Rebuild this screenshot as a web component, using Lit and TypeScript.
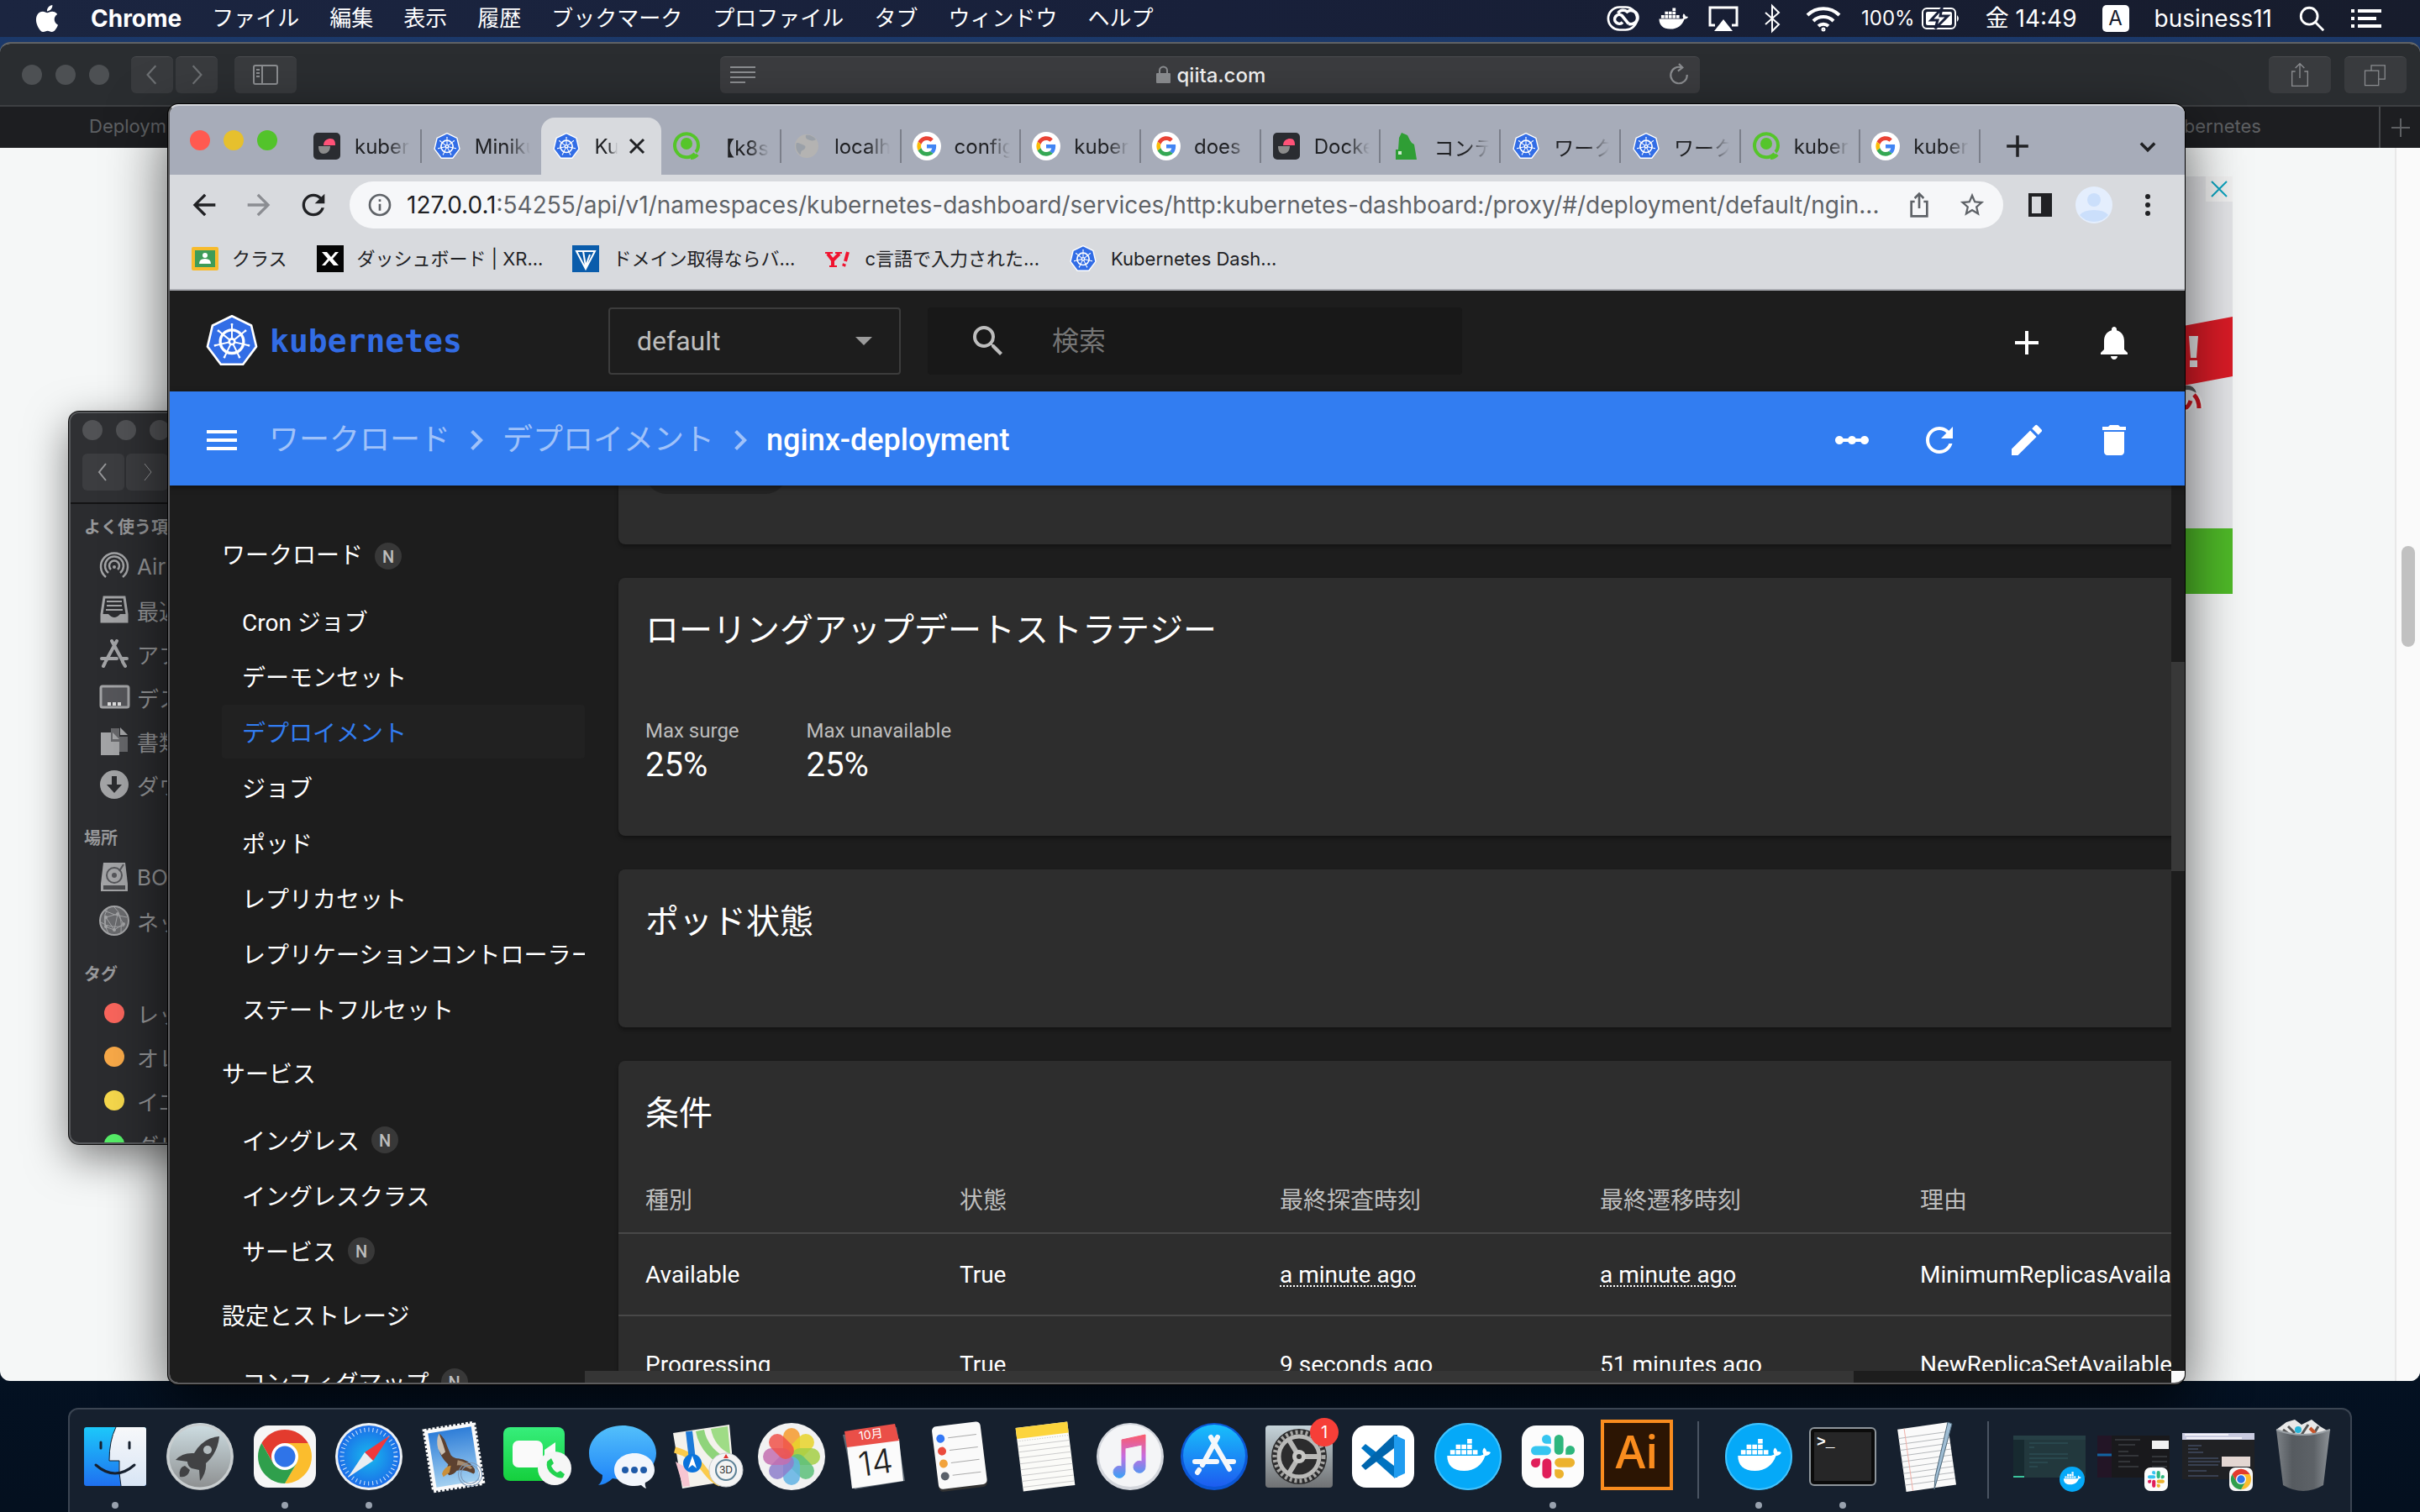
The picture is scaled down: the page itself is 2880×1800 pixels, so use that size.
import { LitElement, html, svg, css } from "lit";
import { customElement } from "lit/decorators.js";
import { classMap } from "lit/directives/class-map.js";

/* ---------- shared styles ---------- */

const base = css`
  *,
  *::before,
  *::after {
    box-sizing: border-box;
  }
  :host {
    display: block;
    font-family: Inter, "Noto Sans CJK JP", sans-serif;
  }
  button,
  input,
  select {
    font: inherit;
    color: inherit;
    border: 0;
    margin: 0;
    padding: 0;
    background: none;
    outline: none;
    min-width: 0;
  }
  a {
    color: inherit;
    text-decoration: none;
  }
  ul,
  nav,
  h2,
  h3,
  dl,
  dd,
  p {
    margin: 0;
    padding: 0;
    list-style: none;
    font-weight: inherit;
  }
  svg {
    display: block;
    flex: none;
    overflow: visible;
  }
  button {
    display: flex;
    align-items: center;
    justify-content: center;
  }
`;

/* ---------- shared drawings ---------- */

const stroke = (size: number, width: number, body: unknown) => html`
  <svg width=${size} height=${size} viewBox="0 0 24 24" fill="none" stroke="currentColor"
    stroke-width=${width} aria-hidden="true">${body}</svg>`;

const solid = (size: number, d: string) => html`
  <svg width=${size} height=${size} viewBox="0 0 24 24" fill="currentColor" aria-hidden="true">
    <path d=${d}></path>
  </svg>`;

const kube = (size: number) => html`
  <svg width=${size} height=${size} viewBox="0 0 100 100" aria-hidden="true">
    <path d="M50 5 85 22 94 60 70 92H30L6 60 15 22Z" fill="#326de6" stroke="#fff" stroke-width="4"
      stroke-linejoin="round"></path>
    <g stroke="#fff" stroke-width="3" fill="none">
      <circle cx="50" cy="51" r="21" stroke-width="5"></circle>
      ${[0, 1, 2, 3, 4, 5, 6].map(
        (k) => svg`<path d="M50 46V18M48 20h4" transform="rotate(${(k * 360) / 7} 50 51)"></path>`
      )}
    </g>
    <circle cx="50" cy="51" r="7" fill="#fff"></circle>
    <circle cx="50" cy="51" r="3" fill="#326de6"></circle>
  </svg>`;

const whale = (fill: string) => svg`
  <g fill=${fill}>
    <path d="M1 12.4h17.2c.9 0 1.6-.3 2-.7-.7-1.1-.6-2.4.3-3.5.9.6 1.3 1.3 1.4 2.1.8-.1 1.5 0 2.1.4-.5 1.2-1.5 1.8-2.9 1.8C19.3 17.4 15.6 20.4 10 20.4c-6 0-9-3-9-8z"></path>
    <path d="M2.6 9.4h2.5v2.4H2.6zM5.6 9.4h2.5v2.4H5.6zM8.6 9.4h2.5v2.4H8.6zM11.6 9.4h2.5v2.4h-2.5zM14.6 9.4h2.5v2.4h-2.5zM5.6 6.5h2.5v2.4H5.6zM8.6 6.5h2.5v2.4H8.6zM11.6 6.5h2.5v2.4h-2.5zM11.6 3.6h2.5V6h-2.5z"></path>
  </g>`;

const chromeMark = svg`
  <path d="M-27.7-16A32 32 0 0 1 27.7-16H0L-13.9 8Z" fill="#e33b2e"></path>
  <path d="M27.7-16A32 32 0 0 1 0 32L13.9 8 0-16Z" fill="#fbbd2d"></path>
  <path d="M0 32A32 32 0 0 1-27.7-16L-13.9 8 0 12 13.9 8Z" fill="#2f9f4c"></path>
  <circle r="16" fill="#fff"></circle>
  <circle r="12.5" fill="#2f74e8"></circle>`;

const slackMark = svg`
  ${[
    ["#36c5f0", 0],
    ["#2eb67d", 90],
    ["#ecb22e", 180],
    ["#e01e5a", 270],
  ].map(
    ([color, turn]) => svg`
      <g fill=${color} transform="rotate(${turn} 12 12)">
        <rect x="0" y="6.2" width="11" height="5" rx="2.5"></rect>
        <path d="M8.5 5A2.5 2.5 0 1 1 11 2.5V5z"></path>
      </g>`
  )}`;

const googleIcon = html`
  <svg width="34" height="34" viewBox="-11 -11 70 70" aria-hidden="true">
    <circle cx="24" cy="24" r="35" fill="#fff"></circle>
    <path fill="#ea4335" d="M24 9.5c3.54 0 6.71 1.22 9.21 3.6l6.85-6.85C35.9 2.38 30.47 0 24 0 14.62 0 6.51 5.38 2.56 13.22l7.98 6.19C12.43 13.72 17.74 9.5 24 9.5z"></path>
    <path fill="#4285f4" d="M46.98 24.55c0-1.57-.15-3.09-.38-4.55H24v9.02h12.94c-.58 2.96-2.26 5.48-4.78 7.18l7.73 6c4.51-4.18 7.09-10.36 7.09-17.65z"></path>
    <path fill="#fbbc05" d="M10.53 28.59c-.48-1.45-.76-2.99-.76-4.59s.27-3.14.76-4.59l-7.98-6.19C.92 16.46 0 20.12 0 24c0 3.88.92 7.54 2.56 10.78l7.97-6.19z"></path>
    <path fill="#34a853" d="M24 48c6.48 0 11.93-2.13 15.89-5.81l-7.73-6c-2.15 1.45-4.92 2.3-8.16 2.3-6.26 0-11.57-4.22-13.47-9.91l-7.98 6.19C6.51 42.62 14.62 48 24 48z"></path>
  </svg>`;

const qiitaIcon = html`
  <svg width="34" height="34" viewBox="0 0 34 34" aria-hidden="true">
    <path d="M27 26A14 14 0 1 1 31 16" fill="none" stroke="#55c52a" stroke-width="4"></path>
    <path d="M31 16q0 5-3 8" fill="none" stroke="#55c52a" stroke-width="4"></path>
    <circle cx="17" cy="14" r="7" fill="#55c52a"></circle>
    <path d="M22 31q5 0 8-4" fill="none" stroke="#55c52a" stroke-width="4"></path>
  </svg>`;

const darkIcon = html`
  <svg width="32" height="32" viewBox="0 0 32 32" aria-hidden="true">
    <rect width="32" height="32" rx="5" fill="#2a2c31"></rect>
    <path d="M12 15C12 9 17 7 20 7c5 0 6 3 6 8z" fill="#ff5278"></path>
    <path d="M6 16h14c0 6-4 9-8 9-5 0-6-5-6-9z" fill="#8b8b8b"></path>
  </svg>`;

const globeIcon = html`
  <svg width="32" height="32" viewBox="0 0 32 32" aria-hidden="true">
    <circle cx="16" cy="16" r="14" fill="#b4b3b2"></circle>
    <path d="M4 12c4 0 6 2 9 3s1 5-2 6-1 5-3 5C4 22 2 17 4 12zM15 3c-1 4 2 5 5 6s6 0 7-1C24 4 19 2 15 3z" fill="#9aa0a8"></path>
  </svg>`;

const towerIcon = html`
  <svg width="32" height="32" viewBox="0 0 32 32" aria-hidden="true">
    <path d="M4 32V20h3l1-14 3-6 7 3 3 6 2 3 3 2 3 18z" fill="#2f9e35"></path>
    <path d="M7 22h4v4H7z" fill="#cfe8cf"></path>
  </svg>`;

const icons = {
  add: "M19 13h-6v6h-2v-6H5v-2h6V5h2v6h6v2z",
  bell: "M12 22c1.1 0 2-.9 2-2h-4c0 1.1.89 2 2 2zm6-6v-5c0-3.07-1.64-5.64-4.5-6.32V4c0-.83-.67-1.5-1.5-1.5s-1.5.67-1.5 1.5v.68C7.63 5.36 6 7.92 6 11v5l-2 2v1h16v-1l-2-2z",
  menu: "M3 18h18v-2H3v2zm0-5h18v-2H3v2zm0-7v2h18V6H3z",
  scale:
    "M19.5 9.5c-1.03 0-1.9.62-2.29 1.5h-2.92c-.39-.88-1.26-1.5-2.29-1.5s-1.9.62-2.29 1.5H6.79c-.39-.88-1.26-1.5-2.29-1.5C3.12 9.5 2 10.62 2 12s1.12 2.5 2.5 2.5c1.03 0 1.9-.62 2.29-1.5h2.92c.39.88 1.26 1.5 2.29 1.5s1.9-.62 2.29-1.5h2.92c.39.88 1.26 1.5 2.29 1.5 1.38 0 2.5-1.12 2.5-2.5s-1.12-2.5-2.5-2.5z",
  refresh:
    "M17.65 6.35C16.2 4.9 14.21 4 12 4c-4.42 0-7.99 3.58-7.99 8s3.57 8 7.99 8c3.73 0 6.84-2.55 7.73-6h-2.08c-.82 2.33-3.04 4-5.65 4-3.31 0-6-2.69-6-6s2.69-6 6-6c1.66 0 3.14.69 4.22 1.78L13 11h7V4l-2.35 2.35z",
  edit: "M3 17.25V21h3.75L17.81 9.94l-3.75-3.75L3 17.25zM20.71 7.04a.996.996 0 0 0 0-1.41l-2.34-2.34a.996.996 0 0 0-1.41 0l-1.83 1.83 3.75 3.75 1.83-1.83z",
  trash: "M6 19c0 1.1.9 2 2 2h8c1.1 0 2-.9 2-2V7H6v12zM19 4h-3.5l-1-1h-5l-1 1H5v2h14V4z",
  search:
    "M15.5 14h-.79l-.28-.27A6.471 6.471 0 0 0 16 9.5 6.5 6.5 0 1 0 9.5 16c1.61 0 3.09-.59 4.23-1.57l.27.28v.79l5 4.99L20.49 19l-4.99-5zm-6 0C7.01 14 5 11.99 5 9.5S7.01 5 9.5 5 14 7.01 14 9.5 11.99 14 9.5 14z",
  chevron: "M10 6 8.59 7.41 13.17 12l-4.58 4.59L10 18l6-6z",
  star: "M22 9.24l-7.19-.62L12 2 9.19 8.63 2 9.24l5.46 4.73L5.82 21 12 17.27 18.18 21l-1.63-7.03L22 9.24zM12 15.4l-3.76 2.27 1-4.28-3.32-2.88 4.38-.38L12 6.1l1.71 4.04 4.38.38-3.32 2.88 1 4.28L12 15.4z",
  back: "M20 11H7.83l5.59-5.59L12 4l-8 8 8 8 1.41-1.41L7.83 13H20v-2z",
  forward: "M12 4l-1.41 1.41L16.17 11H4v2h12.17l-5.58 5.59L12 20l8-8z",
  apple:
    "M12.152 6.896c-.948 0-2.415-1.078-3.96-1.04-2.04.027-3.91 1.183-4.961 3.014-2.117 3.675-.546 9.103 1.519 12.09 1.013 1.454 2.208 3.09 3.792 3.039 1.52-.065 2.09-.987 3.935-.987 1.831 0 2.35.987 3.96.948 1.637-.026 2.676-1.48 3.676-2.948 1.156-1.688 1.636-3.325 1.662-3.415-.039-.013-3.182-1.221-3.22-4.857-.026-3.04 2.48-4.494 2.597-4.559-1.429-2.09-3.623-2.324-4.39-2.376-2-.156-3.675 1.09-4.61 1.09zM15.53 3.83c.843-1.012 1.4-2.427 1.245-3.83-1.207.052-2.662.805-3.532 1.818-.78.896-1.454 2.338-1.273 3.714 1.338.104 2.715-.688 3.559-1.701",
};

const shareBody = svg`<path d="M8 9H5v13h14V9h-3M12 15V2M8 6l4-4 4 4"></path>`;

/* ---------- menu bar ---------- */

@customElement("menu-bar")
export class MenuBar extends LitElement {
  static styles = [
    base,
    css`
      :host {
        background: linear-gradient(90deg, #1b2540, #18203a 50%, #171c2c);
        color: #fff;
        font-size: 26px;
      }
      .bar {
        height: 44px;
        display: flex;
        align-items: center;
        justify-content: space-between;
        padding: 0 46px 0 40px;
        line-height: 44px;
        white-space: nowrap;
      }
      .menus,
      .status,
      .extras {
        display: flex;
        align-items: center;
      }
      .menus {
        gap: 36px;
      }
      .status {
        gap: 30px;
        font-size: 28px;
      }
      .extras {
        gap: 24px;
      }
      .app {
        font-weight: 700;
        font-size: 28px;
      }
      .battery {
        gap: 8px;
        font-size: 24px;
      }
      .input {
        width: 32px;
        height: 32px;
        border-radius: 5px;
        background: #fff;
        color: #171c2c;
        line-height: 32px;
        font-size: 24px;
      }
    `,
  ];

  render() {
    const menus = ["ファイル", "編集", "表示", "履歴", "ブックマーク", "プロファイル", "タブ", "ウィンドウ", "ヘルプ"];
    return html`
      <div class="bar">
        <nav class="menus">
          <button aria-label="Apple">${solid(32, icons.apple)}</button>
          <button class="app">Chrome</button>
          ${menus.map((m) => html`<button>${m}</button>`)}
        </nav>
        <div class="status">
          <div class="extras">
            <button aria-label="Creative Cloud">
              <svg width="36" height="32" viewBox="0 0 40 32" fill="none" stroke="#fff">
                <rect x="1" y="1" width="38" height="30" rx="15" stroke-width="3"></rect>
                <path d="M20 21a6 6 0 1 1-1-9l9 11" stroke-width="4"></path>
                <path d="M14 9a8 8 0 0 1 12-2 9 9 0 1 1 2 16" stroke-width="4"></path>
              </svg>
            </button>
            <button aria-label="Docker">
              <svg width="36" height="36" viewBox="0 0 24 24">${whale("#fff")}</svg>
            </button>
            <button aria-label="AirPlay">
              <svg width="36" height="32" viewBox="0 0 36 32">
                <path d="M8 24H2V3h32v21h-6" fill="none" stroke="#fff" stroke-width="3"></path>
                <path d="M18 17l11 14H7z" fill="#fff"></path>
              </svg>
            </button>
            <button aria-label="Bluetooth">
              <svg width="32" height="32" viewBox="0 0 32 32" fill="none" stroke="#fff" stroke-width="2">
                <path d="M8 9l16 14-8 8V1l8 8L8 23"></path>
              </svg>
            </button>
            <button aria-label="Wi-Fi">
              <svg width="42" height="30" viewBox="0 0 42 30" fill="none" stroke="#fff" stroke-width="4">
                <path d="M2 11a27 27 0 0 1 38 0M9 18a17 17 0 0 1 24 0M15 24a9 9 0 0 1 12 0"></path>
                <circle cx="21" cy="28" r="1" stroke-width="3"></circle>
              </svg>
            </button>
            <button class="battery">
              100%
              <svg width="46" height="26" viewBox="0 0 46 26">
                <rect x="1" y="1" width="39" height="24" rx="5" fill="none" stroke="#fff" stroke-width="2"></rect>
                <rect x="5" y="5" width="31" height="16" rx="2" fill="#fff"></rect>
                <path d="M42 9q4 4 0 8z" fill="#fff"></path>
                <path d="M24 1L11 15h8l-3 10 15-15h-9z" fill="#fff" stroke="#18203a" stroke-width="3"></path>
              </svg>
            </button>
          </div>
          <button>金 14:49</button>
          <button class="input">A</button>
          <button>business11</button>
          <button aria-label="検索">
            ${stroke(34, 2, svg`<circle cx="10" cy="10" r="7"></circle><path d="M15 15l7 7"></path>`)}
          </button>
          <button aria-label="通知センター">
            <svg width="36" height="24" viewBox="0 0 36 24" fill="#fff">
              <path d="M0 1h4v4H0zM8 1h28v4H8zM0 10h4v4H0zM8 10h22v4H8zM0 19h4v4H0zM8 19h28v4H8z"></path>
            </svg>
          </button>
        </div>
      </div>
    `;
  }
}

/* ---------- Safari window ---------- */

@customElement("safari-window")
export class SafariWindow extends LitElement {
  static styles = [
    base,
    css`
      :host {
        display: flex;
        flex-direction: column;
        border-radius: 12px;
        overflow: hidden;
        background: #f5f7f7;
        border-top: 2px solid #5f6265;
        color: #8b8d90;
        font-size: 24px;
      }
      .toolbar {
        height: 73px;
        flex: none;
        background: #2a2d30;
        display: grid;
        grid-template-columns: 1fr 1166px 1fr;
        align-items: center;
      }
      .left,
      .right,
      .lights,
      .nav {
        display: flex;
        align-items: center;
      }
      .left {
        padding-left: 26px;
      }
      .lights {
        gap: 16px;
        margin-right: 26px;
      }
      .light {
        width: 24px;
        height: 24px;
        border-radius: 50%;
        background: #4d5053;
      }
      .nav {
        gap: 3px;
        margin-right: 20px;
      }
      .btn {
        width: 50px;
        height: 44px;
        border-radius: 6px;
        background: #393b3e;
        border-top: 1px solid #4b4d50;
        color: #6d7073;
      }
      .wide {
        width: 74px;
      }
      .right {
        justify-content: flex-end;
        gap: 16px;
        padding-right: 16px;
      }
      .right .btn,
      .left .wide {
        color: #8b8d90;
      }
      .address {
        height: 44px;
        border-radius: 6px;
        background: #3b3c3f;
        border-top: 1px solid #4b4d50;
        display: flex;
        align-items: center;
        justify-content: space-between;
        padding: 0 12px;
      }
      .site {
        display: flex;
        align-items: center;
        gap: 8px;
      }
      .site input {
        width: 108px;
        color: #f2f2f2;
        font-weight: 500;
      }
      .tabs {
        height: 51px;
        flex: none;
        background: #1d1e21;
        border-top: 2px solid #3d3f42;
        display: flex;
        align-items: center;
        justify-content: space-between;
        padding-left: 106px;
        color: #5e6063;
        font-size: 22px;
        line-height: 46px;
      }
      .tail {
        display: flex;
        align-items: flex-start;
        height: 100%;
        gap: 140px;
      }
      .tabs > span {
        align-self: flex-start;
      }
      .new {
        width: 49px;
        height: 100%;
        border-left: 2px solid #46484b;
        color: #5e6063;
      }
      .page {
        flex: 1;
        min-height: 0;
        display: flex;
        justify-content: flex-end;
      }
      .ad {
        width: 300px;
        height: 497px;
        margin: 34px 193px 0 0;
        background: #e4e5e8;
        display: flex;
        flex-direction: column;
        justify-content: space-between;
      }
      .close {
        width: 32px;
        height: 30px;
        align-self: flex-end;
        background: #f1f1f1;
        color: #0aa3bf;
      }
      .art {
        align-self: flex-end;
      }
      .scroll {
        width: 30px;
        border-left: 2px solid #e8e8e8;
        background: #fafafa;
        padding: 474px 6px 0;
      }
      .thumb {
        height: 120px;
        border-radius: 8px;
        background: #c1c1c1;
      }
    `,
  ];

  render() {
    return html`
      <div class="toolbar">
        <div class="left">
          <div class="lights"><i class="light"></i><i class="light"></i><i class="light"></i></div>
          <div class="nav">
            <button class="btn" aria-label="戻る">${stroke(26, 2, svg`<path d="M16 2L7 12l9 10"></path>`)}</button>
            <button class="btn" aria-label="進む">${stroke(26, 2, svg`<path d="M8 2l9 10-9 10"></path>`)}</button>
          </div>
          <button class="btn wide" aria-label="サイドバー">
            <svg width="30" height="24" viewBox="0 0 30 24" fill="none" stroke="currentColor" stroke-width="2">
              <rect x="1" y="1" width="28" height="22" rx="2"></rect>
              <path d="M11 1v22M4 6h4M4 10h4M4 14h4"></path>
            </svg>
          </button>
        </div>
        <div class="address">
          <svg width="30" height="22" viewBox="0 0 30 22" fill="currentColor">
            <path d="M0 1h30v2H0zM0 7h30v2H0zM0 13h30v2H0zM0 19h18v2H0z"></path>
          </svg>
          <label class="site">
            <svg width="17" height="20" viewBox="0 0 17 20">
              <rect y="8" width="17" height="12" rx="1" fill="#8b8d90"></rect>
              <path d="M4 8V5a4 4 0 0 1 9 0v3" fill="none" stroke="#8b8d90" stroke-width="2"></path>
            </svg>
            <input aria-label="アドレス" value="qiita.com" />
          </label>
          ${stroke(26, 2, svg`<path d="M15 4A9 9 0 1 0 21 12M11 8l5-4-4-4"></path>`)}
        </div>
        <div class="right">
          <button class="btn wide" aria-label="共有">${stroke(32, 1, shareBody)}</button>
          <button class="btn wide" aria-label="タブ一覧">
            ${stroke(30, 1, svg`<path d="M2 8h13v14H2zM8 8V3h13v13h-6"></path>`)}
          </button>
        </div>
      </div>
      <div class="tabs">
        <span>Deploym</span>
        <div class="tail">
          <span>kubernetes</span>
          <button class="new" aria-label="新規タブ">${stroke(24, 2, svg`<path d="M12 1v22M1 12h22"></path>`)}</button>
        </div>
      </div>
      <div class="page">
        <div class="ad">
          <button class="close" aria-label="閉じる">${stroke(24, 2, svg`<path d="M3 3l18 18M21 3L3 21"></path>`)}</button>
          <svg class="art" width="80" height="332" viewBox="0 0 80 332">
            <path d="M0 17L80 2v71L0 88z" fill="#d91b26"></path>
            <path d="M28 25h11l-2 26h-7zM29 54h9v8h-9z" fill="#e8e8ea"></path>
            <path d="M22 84q12-2 15 9-9-6-15-3z" fill="#555"></path>
            <path d="M20 108q6 6 10-6M34 95q6 6 6 16" fill="none" stroke="#eee" stroke-width="10"></path>
            <path d="M20 108q6 6 10-6M34 95q6 6 6 16" fill="none" stroke="#c9141f" stroke-width="5"></path>
            <path d="M0 254h80v78H0z" fill="#4fb928"></path>
          </svg>
        </div>
        <div class="scroll"><div class="thumb"></div></div>
      </div>
    `;
  }
}

/* ---------- Finder window ---------- */

@customElement("finder-window")
export class FinderWindow extends LitElement {
  static styles = [
    base,
    css`
      :host {
        background: #2b2c2f;
        border: 2px solid #56585b;
        border-radius: 12px;
        overflow: hidden;
        color: #97989a;
        box-shadow: 0 16px 50px rgba(0, 0, 0, 0.5), 0 0 0 1px #111;
        font-size: 26px;
        white-space: nowrap;
      }
      .head {
        height: 108px;
        background: #2f3033;
        border-bottom: 2px solid #131314;
        padding: 8px 14px;
        display: flex;
        flex-direction: column;
        gap: 16px;
      }
      .lights {
        display: flex;
        gap: 16px;
      }
      .light {
        width: 24px;
        height: 24px;
        border-radius: 50%;
        background: #515255;
        flex: none;
      }
      .nav {
        display: flex;
        gap: 2px;
      }
      .nav button {
        width: 50px;
        height: 44px;
        border-radius: 6px;
        background: #3c3d40;
        flex: none;
      }
      .group {
        padding: 0 16px 18px;
      }
      .group h3 {
        font-size: 20px;
        line-height: 40px;
        font-weight: 600;
      }
      .group:first-of-type {
        padding-top: 8px;
      }
      .row {
        height: 52px;
        display: flex;
        align-items: center;
        gap: 8px;
        padding-left: 17px;
      }
      .row svg {
        width: 38px;
      }
    `,
  ];

  private icon(name: string) {
    const g = "#a3a4a6";
    const shapes: Record<string, unknown> = {
      air: svg`<g fill="none" stroke=${g} stroke-width="2.500"><path d="M8 31a16 16 0 1 1 20 0M11 26a11 11 0 1 1 14 0M14 22a6 6 0 1 1 8 0"></path></g><circle cx="18" cy="19" r="2" fill=${g}></circle>`,
      recent: svg`<path d="M6 3h24l3 20v9H3v-9z" fill="none" stroke=${g} stroke-width="3"></path><path d="M9 8h18M9 13h18M8 18h20" stroke=${g} stroke-width="2"></path><path d="M3 23h8q7 8 14 0h8v10H3z" fill=${g}></path>`,
      apps: svg`<path d="M21 3L8 27M15 3l13 24M3 24h18M27 24h6M7 29l-2 4M28 28l3 5" stroke=${g} stroke-width="4" stroke-linecap="round"></path>`,
      desk: svg`<rect x="2" y="5" width="33" height="25" rx="2" fill="#55565a" stroke=${g} stroke-width="3"></rect><path d="M10 24h4v4h-4zM16 24h4v4h-4zM22 24h4v4h-4z" fill="#ddd"></path>`,
      docs: svg`<path d="M14 3h10v10h10v18H14z" fill="#66676a"></path><path d="M25 2l9 9h-9z" fill=${g}></path><path d="M2 8h12v11h10v16H2z" fill=${g}></path><path d="M16 8l8 8h-8z" fill=${g}></path>`,
      down: svg`<circle cx="18" cy="18" r="17" fill=${g}></circle><path d="M15 8h6v10h6l-9 10-9-10h6z" fill="#2b2c2f"></path>`,
      disk: svg`<path d="M5 1h26l3 25v9H2v-9z" fill=${g}></path><circle cx="18" cy="16" r="9" fill="none" stroke="#55565a" stroke-width="2"></circle><circle cx="18" cy="16" r="3" fill="#55565a"></circle><path d="M5 28h26v5H5z" fill="#4a4b4e"></path><path d="M24 11l5-8" stroke="#55565a" stroke-width="2"></path>`,
      net: svg`<circle cx="18" cy="18" r="17" fill="#6a6b6e" stroke=${g} stroke-width="2"></circle><g fill="none" stroke=${g} stroke-width="1"><path d="M8 14l14-4 7 12-11 7-11-4zM8 14l10 15M22 10l-4 19M18 2q10 8 8 30M6 6q12 6 27 8M2 20q12 8 28 4M10 3Q2 18 11 33"></path></g><g fill=${g}><circle cx="8" cy="14" r="2"></circle><circle cx="22" cy="10" r="2"></circle><circle cx="29" cy="22" r="2"></circle><circle cx="18" cy="29" r="2"></circle><circle cx="8" cy="25" r="2"></circle></g>`,
    };
    if (name.startsWith("#")) {
      return html`<svg width="38" height="36" viewBox="0 0 36 36"><circle cx="18" cy="18" r="12" fill=${name}></circle></svg>`;
    }
    return html`<svg width="38" height="36" viewBox="0 0 36 36">${shapes[name]}</svg>`;
  }

  render() {
    const groups: [string, [string, string][]][] = [
      ["よく使う項目", [["air", "AirDrop"], ["recent", "最近の項目"], ["apps", "アプリ"], ["desk", "デスクトップ"], ["docs", "書類"], ["down", "ダウンロード"]]],
      ["場所", [["disk", "BOOTCAMP"], ["net", "ネットワーク"]]],
      ["タグ", [["#f9655c", "レッド"], ["#f8a948", "オレンジ"], ["#f6d84c", "イエロー"], ["#56ee68", "グリーン"]]],
    ];
    return html`
      <div class="head">
        <div class="lights"><i class="light"></i><i class="light"></i><i class="light"></i></div>
        <div class="nav">
          <button aria-label="戻る">${stroke(24, 2, svg`<path d="M15 2L7 12l8 10"></path>`)}</button>
          <button aria-label="進む">${stroke(24, 1, svg`<path d="M9 2l8 10-8 10"></path>`)}</button>
        </div>
      </div>
      ${groups.map(
        ([title, rows]) => html`
          <section class="group">
            <h3>${title}</h3>
            ${rows.map(([icon, label]) => html`<div class="row">${this.icon(icon)}<span>${label}</span></div>`)}
          </section>`
      )}
    `;
  }
}

/* ---------- Kubernetes dashboard ---------- */

@customElement("kube-dashboard")
export class KubeDashboard extends LitElement {
  static styles = [
    base,
    css`
      :host {
        display: flex;
        flex-direction: column;
        min-height: 0;
        background: #1d1d1d;
        color: #fff;
        font-family: Roboto, "Noto Sans CJK JP", sans-serif;
        font-size: 28px;
      }
      .top {
        height: 120px;
        flex: none;
        display: flex;
        align-items: center;
        padding: 0 60px 0 41px;
      }
      .brand {
        display: flex;
        align-items: center;
        gap: 12px;
        width: 481px;
        color: #326ce5;
        font-family: "DejaVu Sans Mono", monospace;
        font-size: 38px;
        font-weight: 700;
      }
      .picker {
        width: 348px;
        height: 80px;
        border: 2px solid #3c3c3c;
        border-radius: 4px;
        position: relative;
        display: flex;
        align-items: center;
      }
      .picker select {
        appearance: none;
        width: 100%;
        height: 100%;
        padding: 0 32px;
        font-size: 32px;
        color: #bdbdbd;
      }
      .picker::after {
        content: "";
        position: absolute;
        right: 32px;
        border: 10px solid transparent;
        border-top-color: #9b9b9b;
        border-bottom: 0;
        pointer-events: none;
      }
      .search {
        margin-left: 32px;
        width: 636px;
        height: 80px;
        background: #181818;
        border-radius: 4px;
        display: flex;
        align-items: center;
        gap: 52px;
        padding-left: 48px;
        color: #bdbdbd;
      }
      .search input {
        flex: 1;
        font-size: 32px;
      }
      .search input::placeholder {
        color: #757575;
        opacity: 1;
      }
      .tools {
        margin-left: auto;
        display: flex;
        gap: 56px;
      }
      .top .tools {
        padding-top: 4px;
      }
      .bar {
        height: 112px;
        flex: none;
        background: #327df1;
        display: flex;
        align-items: center;
        padding: 4px 60px 0 38px;
        font-size: 36px;
        line-height: 48px;
        box-shadow: 0 2px 6px rgba(0, 0, 0, 0.5);
        z-index: 1;
      }
      .crumbs {
        display: flex;
        align-items: center;
        gap: 7px;
        margin-left: 32px;
        color: #a0c2f9;
      }
      .crumbs b {
        font-weight: 500;
        color: #fff;
      }
      .body {
        flex: 1;
        min-height: 0;
        display: flex;
      }
      .side {
        width: 494px;
        flex: none;
        overflow: hidden;
        padding: 39px 0 0 62px;
        white-space: nowrap;
      }
      .side h2 {
        font-size: 28px;
        line-height: 90px;
        display: flex;
        align-items: center;
        gap: 14px;
      }
      .side li {
        padding-bottom: 2px;
      }
      .side a {
        display: flex;
        align-items: center;
        gap: 14px;
        height: 64px;
        padding-left: 24px;
        border-radius: 4px;
      }
      .side .on {
        background: #212121;
        color: #327df1;
      }
      .badge {
        width: 32px;
        height: 32px;
        border-radius: 50%;
        background: #383838;
        color: #bdbdbd;
        font-size: 20px;
        font-weight: 500;
        line-height: 34px;
        text-align: center;
      }
      .main {
        flex: 1;
        min-width: 0;
        display: grid;
        grid-template-columns: minmax(0, 1fr) 16px;
        grid-template-rows: minmax(0, 1fr) 14px;
      }
      .view {
        overflow: hidden;
      }
      .content {
        width: 125%;
        padding: 0 40px;
        display: flex;
        flex-direction: column;
        gap: 40px;
      }
      .card {
        background: #2d2d2d;
        border-radius: 8px;
        box-shadow: 0 3px 4px rgba(0, 0, 0, 0.35);
        padding: 39px 32px 0;
      }
      .cut {
        margin-top: -40px;
        padding: 0 32px 60px;
      }
      .chip {
        width: 168px;
        height: 50px;
        border-radius: 25px;
        background: #232323;
      }
      .card h2 {
        font-size: 40px;
        line-height: 48px;
      }
      .facts {
        display: flex;
        gap: 80px;
        padding: 78px 0 60px;
      }
      .facts dt {
        font-size: 24px;
        line-height: 34px;
        color: #bdbdbd;
      }
      .facts dd {
        font-size: 40px;
        line-height: 48px;
      }
      .empty {
        padding-bottom: 101px;
      }
      .flush {
        padding: 39px 0 0;
      }
      .flush h2 {
        padding-left: 32px;
      }
      table {
        width: 100%;
        margin-top: 36px;
        border-collapse: collapse;
        table-layout: fixed;
      }
      th,
      td {
        text-align: left;
        font-weight: 400;
        padding: 0;
        white-space: nowrap;
        border-bottom: 2px solid #484848;
      }
      th:first-child,
      td:first-child {
        padding-left: 32px;
      }
      th {
        height: 82px;
        color: #bdbdbd;
      }
      td {
        height: 98px;
      }
      .tall td {
        height: 116px;
      }
      .c1 {
        width: 406px;
      }
      .c2 {
        width: 381px;
      }
      .time {
        text-decoration: underline dotted 2px;
        text-underline-offset: 4px;
      }
      .vtrack {
        padding-top: 210px;
      }
      .vthumb {
        height: 249px;
        background: #383838;
      }
      .hthumb {
        width: 80%;
        height: 100%;
        background: #353535;
      }
      .corner {
        background: #fafafa;
      }
    `,
  ];

  render() {
    const nav: [string, boolean, [string, boolean][]][] = [
      ["ワークロード", true, [["Cron ジョブ", false], ["デーモンセット", false], ["デプロイメント", false], ["ジョブ", false], ["ポッド", false], ["レプリカセット", false], ["レプリケーションコントローラー", false], ["ステートフルセット", false]]],
      ["サービス", false, [["イングレス", true], ["イングレスクラス", false], ["サービス", true]]],
      ["設定とストレージ", false, [["コンフィグマップ", true]]],
    ];
    const badge = html`<span class="badge">N</span>`;
    const rows = [
      ["Available", "True", "a minute ago", "a minute ago", "MinimumReplicasAvailable"],
      ["Progressing", "True", "9 seconds ago", "51 minutes ago", "NewReplicaSetAvailable"],
    ];
    return html`
      <header class="top">
        <a class="brand" href="#">${kube(66)}<span>kubernetes</span></a>
        <div class="picker">
          <select aria-label="ネームスペース"><option>default</option></select>
        </div>
        <label class="search">
          ${solid(48, icons.search)}
          <input type="text" placeholder="検索" aria-label="検索" />
        </label>
        <div class="tools">
          <button aria-label="作成">${solid(48, icons.add)}</button>
          <button aria-label="通知">${solid(48, icons.bell)}</button>
        </div>
      </header>
      <div class="bar">
        <button aria-label="メニュー">${solid(48, icons.menu)}</button>
        <nav class="crumbs">
          <a href="#">ワークロード</a>
          ${solid(48, icons.chevron)}
          <a href="#">デプロイメント</a>
          ${solid(48, icons.chevron)}
          <b>nginx-deployment</b>
        </nav>
        <div class="tools">
          <button aria-label="スケール">${solid(48, icons.scale)}</button>
          <button aria-label="再起動">${solid(48, icons.refresh)}</button>
          <button aria-label="編集">${solid(48, icons.edit)}</button>
          <button aria-label="削除">${solid(48, icons.trash)}</button>
        </div>
      </div>
      <div class="body">
        <nav class="side">
          ${nav.map(
            ([title, flagged, items]) => html`
              <h2>${title}${flagged ? badge : ""}</h2>
              <ul>
                ${items.map(
                  ([label, mark]) => html`
                    <li>
                      <a href="#" class=${classMap({ on: label === "デプロイメント" })}>${label}${mark ? badge : ""}</a>
                    </li>`
                )}
              </ul>`
          )}
        </nav>
        <div class="main">
          <div class="view">
            <div class="content">
              <section class="card cut"><div class="chip"></div></section>
              <section class="card">
                <h2>ローリングアップデートストラテジー</h2>
                <dl class="facts">
                  <div><dt>Max surge</dt><dd>25%</dd></div>
                  <div><dt>Max unavailable</dt><dd>25%</dd></div>
                </dl>
              </section>
              <section class="card empty"><h2>ポッド状態</h2></section>
              <section class="card flush">
                <h2>条件</h2>
                <table>
                  <colgroup><col class="c1" /><col class="c2" /><col class="c2" /><col class="c2" /><col /></colgroup>
                  <thead>
                    <tr><th>種別</th><th>状態</th><th>最終探査時刻</th><th>最終遷移時刻</th><th>理由</th></tr>
                  </thead>
                  <tbody>
                    ${rows.map(
                      (r, i) => html`
                        <tr class=${classMap({ tall: i === 1 })}>
                          ${r.map((c, k) => html`<td>${k === 2 || k === 3 ? html`<span class="time">${c}</span>` : c}</td>`)}
                        </tr>`
                    )}
                  </tbody>
                </table>
              </section>
            </div>
          </div>
          <div class="vtrack"><div class="vthumb"></div></div>
          <div><div class="hthumb"></div></div>
          <div class="corner"></div>
        </div>
      </div>
    `;
  }
}

/* ---------- Chrome window ---------- */

@customElement("chrome-window")
export class ChromeWindow extends LitElement {
  static styles = [
    base,
    css`
      :host {
        display: flex;
        flex-direction: column;
        border-radius: 12px;
        overflow: hidden;
        background: #d8dade;
        color: #202124;
        font-size: 24px;
        border: 2px solid #5c5c5e;
        border-top-color: #d3d5da;
        border-right-width: 0;
        box-shadow: 0 0 0 1px #000, 0 24px 70px rgba(0, 0, 0, 0.65);
      }
      .strip {
        height: 82px;
        flex: none;
        background: #a7acb9;
        display: flex;
        align-items: flex-end;
      }
      .lights {
        width: 157px;
        height: 82px;
        display: flex;
        align-items: center;
        gap: 16px;
        padding-left: 24px;
      }
      .light {
        width: 24px;
        height: 24px;
        border-radius: 50%;
      }
      .red {
        background: #ff5a50;
      }
      .yellow {
        background: #e6c02d;
      }
      .green {
        background: #53c32b;
      }
      .tabs {
        flex: 1;
        min-width: 0;
        display: flex;
      }
      .tab {
        flex: 1 1 0;
        height: 68px;
        min-width: 0;
        display: flex;
        align-items: center;
        justify-content: flex-start;
        padding-left: 13px;
        gap: 16px;
        position: relative;
      }
      .tab::after {
        content: "";
        position: absolute;
        right: 0;
        top: 14px;
        height: 40px;
        width: 2px;
        background: #7b7f8a;
      }
      .tab.on {
        background: #d8dade;
        border-radius: 16px 16px 0 0;
        flex-basis: 4px;
      }
      .tab.on::after,
      .tab.before::after {
        display: none;
      }
      .tab svg {
        width: 34px;
      }
      .title {
        width: 66px;
        overflow: hidden;
        white-space: nowrap;
        text-align: left;
        mask-image: linear-gradient(90deg, #000 60%, transparent);
      }
      .tab.on .title {
        width: 28px;
      }
      .tab.on .x {
        width: 22px;
        margin-left: -4px;
      }
      .ends {
        width: 243px;
        height: 68px;
        display: flex;
        align-items: center;
        justify-content: space-between;
        padding: 0 30px;
      }
      .toolbar {
        height: 72px;
        flex: none;
        display: flex;
        align-items: center;
        padding: 0 28px 0 21px;
      }
      .nav {
        display: flex;
        gap: 25px;
        width: 193px;
      }
      .off {
        color: #8b8d92;
      }
      .pill {
        flex: 1;
        min-width: 0;
        height: 56px;
        border-radius: 28px;
        background: #f6f7f9;
        display: flex;
        align-items: center;
        padding: 0 20px;
        font-size: 28px;
        color: #5f6368;
      }
      .pill label {
        color: #202124;
        margin-left: 16px;
      }
      .pill input {
        flex: 1;
      }
      .pill button {
        margin-left: 30px;
      }
      .side {
        display: flex;
        align-items: center;
        gap: 26px;
        padding-left: 28px;
      }
      .marks {
        height: 66px;
        flex: none;
        border-bottom: 2px solid #aaadb3;
        display: flex;
        align-items: flex-start;
        gap: 35px;
        padding: 12px 26px 0;
        font-size: 22px;
        white-space: nowrap;
      }
      .marks a {
        display: flex;
        align-items: center;
        gap: 16px;
        height: 32px;
        line-height: 32px;
      }
      kube-dashboard {
        flex: 1;
      }
    `,
  ];

  render() {
    const k = kube(36);
    const tabs: [unknown, string][] = [
      [darkIcon, "kubern"],
      [k, "Miniku"],
      [k, "Kub"],
      [qiitaIcon, "【k8s】"],
      [globeIcon, "localho"],
      [googleIcon, "config"],
      [googleIcon, "kubern"],
      [googleIcon, "does"],
      [darkIcon, "Docker"],
      [towerIcon, "コンテ"],
      [k, "ワーク"],
      [k, "ワーク"],
      [qiitaIcon, "kubern"],
      [googleIcon, "kubern"],
    ];
    return html`
      <div class="strip">
        <div class="lights"><i class="light red"></i><i class="light yellow"></i><i class="light green"></i></div>
        <div class="tabs">
          ${tabs.map(
            ([icon, title], i) => html`
              <button class=${classMap({ tab: true, on: i === 2, before: i === 1 })}>
                ${icon}<span class="title">${title}</span>
                ${i === 2
                  ? html`<svg class="x" width="22" height="22" viewBox="0 0 22 22" stroke="#202124" stroke-width="3"><path d="M3 3l16 16M19 3L3 19"></path></svg>
                      `
                  : ""}
              </button>`
          )}
        </div>
        <div class="ends">
          <button aria-label="新しいタブ">${stroke(28, 3, svg`<path d="M12 1v22M1 12h22"></path>`)}</button>
          <button aria-label="タブを検索">${stroke(28, 3, svg`<path d="M5 9l7 7 7-7"></path>`)}</button>
        </div>
      </div>
      <div class="toolbar">
        <div class="nav">
          <button aria-label="戻る">${solid(40, icons.back)}</button>
          <button class="off" aria-label="進む">${solid(40, icons.forward)}</button>
          <button aria-label="再読み込み">${solid(40, icons.refresh)}</button>
        </div>
        <div class="pill">
          ${stroke(32, 2, svg`<circle cx="12" cy="12" r="9"></circle><path d="M12 11v6M12 7v2"></path>`)}
          <label for="url">127.0.0.1</label>
          <input id="url" value=":54255/api/v1/namespaces/kubernetes-dashboard/services/http:kubernetes-dashboard:/proxy/#/deployment/default/ngin..." />
          <button aria-label="共有">${stroke(32, 2, shareBody)}</button>
          <button aria-label="ブックマーク">${solid(34, icons.star)}</button>
        </div>
        <div class="side">
          <button aria-label="サイドパネル">
            <svg width="32" height="28" viewBox="0 0 32 28"><path d="M2 0h28v28H2zM6 4v20h11V4z" fill="#202124" fill-rule="evenodd"></path></svg>
          </button>
          <button aria-label="プロフィール">
            <svg width="44" height="44" viewBox="0 0 44 44">
              <circle cx="22" cy="22" r="22" fill="#e4eefd"></circle>
              <circle cx="22" cy="16" r="8" fill="#cbdffb"></circle>
              <path d="M5 34a18 9 0 0 1 34 0 22 22 0 0 1-34 0z" fill="#cbdffb"></path>
            </svg>
          </button>
          <button aria-label="メニュー">
            <svg width="32" height="28" viewBox="0 0 32 28" fill="#202124">
              <circle cx="16" cy="4" r="3"></circle><circle cx="16" cy="14" r="3"></circle><circle cx="16" cy="24" r="3"></circle>
            </svg>
          </button>
        </div>
      </div>
      <nav class="marks">
        <a href="#">
          <svg width="32" height="28" viewBox="0 0 32 28">
            <rect width="32" height="28" rx="2" fill="#f7bb2c"></rect>
            <rect x="4" y="4" width="24" height="20" fill="#3f9c58"></rect>
            <circle cx="16" cy="10" r="3" fill="#fff"></circle>
            <path d="M9 20q0-6 7-6t7 6z" fill="#fff"></path>
          </svg>クラス</a>
        <a href="#">
          <svg width="32" height="32" viewBox="0 0 32 32">
            <rect width="32" height="32" fill="#050505"></rect>
            <path d="M6 8h6l5 6 5-6h4l-7 8 7 8h-6l-5-6-5 6H6l7-8z" fill="#fff"></path>
          </svg>ダッシュボード | XR...</a>
        <a href="#">
          <svg width="32" height="32" viewBox="0 0 32 32">
            <rect width="32" height="32" fill="#0a5cab"></rect>
            <path d="M5 7h22L16 28zM13 7l3 18 5-14" fill="none" stroke="#fff" stroke-width="2"></path>
          </svg>ドメイン取得ならバ...</a>
        <a href="#">
          <svg width="32" height="32" viewBox="0 0 32 32" fill="none" stroke="#f0132f">
            <path d="M4 10l6 8v6M18 10l-8 8" stroke-width="4"></path>
            <path d="M1 9h9M13 9h8M6 25h9" stroke-width="2"></path>
            <path d="M28 8l-3 11M24 22l-1 3" stroke-width="4"></path>
          </svg>c言語で入力された...</a>
        <a href="#">${kube(34)}Kubernetes Dash...</a>
      </nav>
      <kube-dashboard></kube-dashboard>
    `;
  }
}

/* ---------- Dock ---------- */

@customElement("app-dock")
export class AppDock extends LitElement {
  static styles = [
    base,
    css`
      :host {
        display: flex;
        background: #16202e;
        border: 2px solid #3b4552;
        border-bottom: 0;
        border-radius: 12px 12px 0 0;
        padding: 12px 6px 0 4px;
      }
      .slot {
        flex: 1 1 0;
        min-width: 0;
        flex-direction: column;
        justify-content: flex-start;
        gap: 10px;
      }
      .slot::after {
        content: "";
        width: 8px;
        height: 8px;
        border-radius: 50%;
      }
      .run::after {
        background: #98a1ae;
      }
      .rule {
        width: 44px;
        display: flex;
        justify-content: center;
      }
      .rule::before {
        content: "";
        width: 2px;
        height: 92px;
        margin-top: 2px;
        background: #4a5462;
      }
    `,
  ];

  private art(name: string) {
    switch (name) {
      case "Finder":
        return svg`
          <defs><linearGradient id="fa" x1="0" y1="0" x2="0" y2="1"><stop offset="0" stop-color="#1cc8fa"></stop><stop offset="1" stop-color="#1f70f0"></stop></linearGradient>
          <linearGradient id="fb" x1="0" y1="0" x2="0" y2="1"><stop offset="0" stop-color="#f7f8fa"></stop><stop offset="1" stop-color="#d8e5f5"></stop></linearGradient></defs>
          <rect x="7" y="9" width="74" height="70" rx="3" fill="url(#fa)"></rect>
          <path d="M45 9q-8 16-8 40h12q-1 14 2 30h27a3 3 0 0 0 3-3V12a3 3 0 0 0-3-3z" fill="url(#fb)"></path>
          <path d="M27 27v7M61 27v7M21 54q23 20 46 0" fill="none" stroke="#16202e" stroke-width="3" stroke-linecap="round"></path>
          <path d="M45 9q-8 16-8 40h12q-1 14 2 30" fill="none" stroke="#16202e" stroke-width="1"></path>`;
      case "Launchpad":
        return svg`
          <defs><linearGradient id="la" x1="0" y1="0" x2="0" y2="1"><stop offset="0" stop-color="#cfdfe4"></stop><stop offset="1" stop-color="#8b8d8e"></stop></linearGradient></defs>
          <circle cx="44" cy="44" r="40" fill="url(#la)"></circle><circle cx="44" cy="44" r="38" fill="none" stroke="#c9ced0" stroke-width="3"></circle>
          <path d="M67 20q-16 1-26 14l-4 6q-14-1-22 8l14 2q0 5 5 8l9 2 1 13q8-10 7-21 14-12 16-32z" fill="#414244"></path>
          <circle cx="53" cy="36" r="5" fill="#b3bcbf"></circle>
          <path d="M26 55q-8 2-6 13 9 2 12-8z" fill="#414244"></path>`;
      case "Chrome":
        return svg`<rect x="7" y="7" width="74" height="74" rx="17" fill="#f6f6f6"></rect><g transform="translate(44 44)">${chromeMark}</g>`;
      case "Safari":
        return svg`
          <defs><radialGradient id="sa"><stop offset="0" stop-color="#18b9ee"></stop><stop offset="1" stop-color="#1b6de8"></stop></radialGradient></defs>
          <circle cx="44" cy="44" r="40" fill="#eef1f3"></circle><circle cx="44" cy="44" r="37" fill="url(#sa)"></circle>
          <circle cx="44" cy="44" r="32" fill="none" stroke="#fff" stroke-width="5" stroke-dasharray="1 4" opacity=".8"></circle>
          <path d="M69 19L49 49 39 39z" fill="#f0383c"></path><path d="M39 39L19 69 49 49z" fill="#e9eef2"></path>`;
      case "Mail":
        return svg`
          <defs><linearGradient id="ma" x1="0" y1="0" x2="0" y2="1"><stop offset="0" stop-color="#2f7ed8"></stop><stop offset="1" stop-color="#a3d0f0"></stop></linearGradient></defs>
          <g transform="rotate(-9 44 44)">
            <rect x="14" y="8" width="60" height="73" fill="#fafafa" stroke="#fafafa" stroke-width="4" stroke-dasharray="3 2"></rect>
            <rect x="18" y="12" width="52" height="65" fill="url(#ma)"></rect>
            <path d="M31 14q6 6 7 16l3 12q4 5 8 5 12 3 17 15 1 5-2 6-9-7-19-7-4 4-10 4l-3-5 4-8q-8-10-8-20-1-11 3-18z" fill="#5d4130"></path>
            <path d="M31 14q-5 7-4 18l3 8 5-3q-1-10-4-23z" fill="#cdc2b4"></path>
            <path d="M48 49q11 4 16 12l-3 1q-8-7-15-7z" fill="#a58a6e"></path>
            <path d="M27 62q4-8 12-8l-3 8-8 4z" fill="#c98f3a"></path>
            <circle cx="60" cy="68" r="11" fill="none" stroke="#7d98b8" stroke-width="1"></circle>
            <circle cx="60" cy="68" r="14" fill="none" stroke="#7d98b8" stroke-width="1"></circle>
          </g>`;
      case "FaceTime":
        return svg`
          <defs><linearGradient id="ft" x1="0" y1="0" x2="0" y2="1"><stop offset="0" stop-color="#36ee7b"></stop><stop offset="1" stop-color="#15cf3d"></stop></linearGradient></defs>
          <rect x="3" y="9" width="73" height="64" rx="8" fill="url(#ft)"></rect>
          <rect x="14" y="25" width="36" height="32" rx="7" fill="#fafafa"></rect><path d="M52 36l13-9v26L52 46z" fill="#fafafa"></path>
          <circle cx="64" cy="58" r="20" fill="#f6f6f6"></circle>
          <path d="M55 50q-2 9 6 15t13 4l2-4-5-4-4 2q-5-3-7-8l3-3-3-6z" fill="#22d34f"></path>`;
      case "Messages":
        return svg`
          <defs><linearGradient id="mg" x1="0" y1="0" x2="0" y2="1"><stop offset="0" stop-color="#53c0fb"></stop><stop offset="1" stop-color="#1d82f8"></stop></linearGradient></defs>
          <path d="M44 7C22 7 4 21 4 40c0 12 6 20 16 26q0 8-5 12 10-1 17-8c4 1 8 1 12 1 22 0 40-13 40-31S66 7 44 7z" fill="url(#mg)"></path>
          <path d="M58 40c-14 0-24 9-24 20s10 19 24 19q4 0 8-1 3 3 6 4-2-4-1-7c7-3 11-9 11-15 0-11-10-20-24-20z" fill="#f2f6fc"></path>
          <circle cx="47" cy="60" r="4" fill="#1e5aa8"></circle><circle cx="58" cy="60" r="4" fill="#1e5aa8"></circle><circle cx="69" cy="60" r="4" fill="#1e5aa8"></circle>`;
      case "Maps":
        return svg`
          <path d="M3 16L70 6l6 66-62 10z" fill="#f4f2ec"></path>
          <path d="M6 50l14 8 3 21-8 1z" fill="#f7c6d2"></path>
          <path d="M30 14l10-2q4 24 34 38l1 12Q36 46 30 14z" fill="#8fd47a"></path>
          <path d="M48 11l20-3 3 33Q52 32 48 11z" fill="#9fdc86"></path>
          <path d="M5 36q22 6 34 22t20 18" fill="none" stroke="#fbcb4b" stroke-width="7"></path>
          <path d="M22 14l4 34" stroke="#1c79d8" stroke-width="8"></path>
          <circle cx="26" cy="52" r="11" fill="#0a73dc"></circle><path d="M26 43l5 15-5-4-5 4z" fill="#fff"></path>
          <circle cx="66" cy="60" r="20" fill="#f4f4f4" stroke="#c8ccd0" stroke-width="1"></circle>
          <circle cx="66" cy="60" r="12" fill="none" stroke="#5d8297" stroke-width="2"></circle>
          <path d="M66 41l3 5h-6z" fill="#e0302b"></path>
          <text x="66" y="64" font-size="12" font-family="Inter, sans-serif" text-anchor="middle" fill="#333">3D</text>`;
      case "Photos":
        return svg`<circle cx="44" cy="44" r="40" fill="#f2f2f2"></circle>
          ${["#f69a2d", "#e8d42a", "#a5cf45", "#5dbf7a", "#62b3e4", "#8d7ecb", "#c36fb0", "#f0524a"].map(
            (c, i) => svg`<rect x="34" y="10" width="20" height="34" rx="10" fill=${c} opacity=".85" transform="rotate(${i * 45} 44 44)"></rect>`
          )}`;
      case "Calendar":
        return svg`
          <path d="M4 18l64-9 10 64-60 10z" fill="#5d6873"></path>
          <path d="M9 32l62-9 5 50-61 9z" fill="#fbfbfb"></path><path d="M6 14L66 5l5 20-62 8z" fill="#ea4f48"></path>
          <g transform="rotate(-8 44 44)" font-family="Inter, 'Noto Sans CJK JP', sans-serif" text-anchor="middle">
            <text x="41" y="22" font-size="14" fill="#fff">10月</text>
            <text x="42" y="65" font-size="40" font-weight="300" fill="#222">14</text>
          </g>`;
      case "Reminders":
        return svg`<g transform="rotate(-7 44 44)">
          <rect x="14" y="8" width="58" height="75" rx="5" fill="#333"></rect><rect x="14" y="5" width="58" height="75" rx="5" fill="#fafafa"></rect>
          ${["#3478f6", "#eb4b3d", "#f2a33c", "#5b626b"].map(
            (c, i) => svg`<circle cx="23" cy=${20 + i * 15} r="5" fill=${c}></circle><path d="M32 ${20 + i * 15}h34" stroke="#aaa" stroke-width="1"></path>`
          )}</g>`;
      case "Notes":
        return svg`<g transform="rotate(-7 44 44)">
          <rect x="13" y="6" width="62" height="76" fill="#fbfbf8"></rect><rect x="13" y="6" width="62" height="13" fill="#fcd43c"></rect>
          <path d="M13 28h62M13 35h62M13 42h62M13 49h62M13 56h62M13 63h62M13 70h62M13 77h62" stroke="#ccc"></path>
          <path d="M13 22h62" stroke="#bbb" stroke-dasharray="1 2"></path></g>`;
      case "Music":
        return svg`
          <defs><linearGradient id="mu" x1="0" y1="0" x2="0" y2="1"><stop offset="0" stop-color="#fb5b6b"></stop><stop offset=".5" stop-color="#c66ce0"></stop><stop offset="1" stop-color="#3aa0f5"></stop></linearGradient></defs>
          <circle cx="44" cy="44" r="40" fill="#d3d6dc"></circle><circle cx="44" cy="43" r="37" fill="#f4f5f7"></circle>
          <path d="M34 24l28-6v38a7 7 0 1 1-4-6V30l-20 4v28a7 7 0 1 1-4-6z" fill="url(#mu)" stroke="url(#mu)" stroke-width="1"></path>`;
      case "App Store":
        return svg`
          <defs><linearGradient id="as" x1="0" y1="0" x2="0" y2="1"><stop offset="0" stop-color="#18bffb"></stop><stop offset="1" stop-color="#1d5cf0"></stop></linearGradient></defs>
          <circle cx="44" cy="44" r="40" fill="#0b57d6"></circle><circle cx="44" cy="43" r="37" fill="url(#as)"></circle>
          <path d="M48 21L30 54M40 21l22 38M21 50h26M57 50h10M26 60l-2 3" stroke="#f6f8fb" stroke-width="6" stroke-linecap="round"></path>`;
      case "System":
        return svg`
          <defs><linearGradient id="sy" x1="0" y1="0" x2="0" y2="1"><stop offset="0" stop-color="#c5d3da"></stop><stop offset="1" stop-color="#6f7173"></stop></linearGradient></defs>
          <rect x="4" y="7" width="80" height="74" rx="4" fill="url(#sy)"></rect><circle cx="44" cy="44" r="33" fill="#2c2c2d"></circle>
          <circle cx="44" cy="44" r="29" fill="none" stroke="#a7a7a5" stroke-width="5" stroke-dasharray="3 3"></circle>
          <circle cx="44" cy="44" r="24" fill="none" stroke="#b9b9b7" stroke-width="5"></circle>
          <path d="M44 44h23M44 44L32 24M44 44L32 64" stroke="#b9b9b7" stroke-width="6"></path>
          <circle cx="44" cy="44" r="8" fill="#c7c7c5"></circle><circle cx="44" cy="44" r="3" fill="#333"></circle>
          <circle cx="74" cy="15" r="17" fill="#f63f38"></circle>
          <text x="74" y="22" font-size="20" font-family="Inter, sans-serif" text-anchor="middle" fill="#fff">1</text>`;
      case "VS Code":
        return svg`<rect x="7" y="7" width="74" height="74" rx="17" fill="#fff"></rect>
          <path d="M18 34l5-5 38 29v11h-4z" fill="#0073c1"></path><path d="M18 55l5 5 38-29V18h-4z" fill="#0065ad"></path>
          <path d="M57 18l13 6v40l-13 6z" fill="#1f9cf0"></path>`;
      case "Docker":
        return svg`<circle cx="44" cy="44" r="40" fill="#05a9f8"></circle>
          <circle cx="44" cy="44" r="39" fill="none" stroke="#43c1fb" stroke-width="2"></circle>
          <g transform="translate(17 15) scale(2.25)">${whale("#fff")}</g>`;
      case "Slack":
        return svg`<rect x="7" y="7" width="74" height="74" rx="17" fill="#fcfcfc"></rect>
          <g transform="translate(18 18) scale(2.17)">${slackMark}</g>`;
      case "Illustrator":
        return svg`<rect x="3" y="2" width="82" height="80" fill="#2c1503" stroke="#f98c1e" stroke-width="4"></rect>
          <text x="44" y="58" font-size="54" font-weight="600" font-family="Open Sans, sans-serif" text-anchor="middle" fill="#f98c1e">Ai</text>`;
      case "Terminal":
        return svg`<rect x="5" y="10" width="78" height="68" rx="5" fill="#0b0b0b" stroke="#8e959b" stroke-width="2"></rect>
          <rect x="10" y="15" width="68" height="58" fill="#262627"></rect>
          <text x="13" y="32" font-size="18" font-weight="700" font-family="Liberation Mono, monospace" fill="#fff">&gt;_</text>`;
      case "TextEdit":
        return svg`<g transform="rotate(-8 44 44)"><rect x="13" y="7" width="60" height="75" fill="#fafafa"></rect>
          <path d="M13 18h60M13 25h60M13 32h60M13 39h60M13 46h60M13 53h60M13 60h60M13 67h60M13 74h60" stroke="#b5b8bb"></path>
          <path d="M21 7v75" stroke="#f0b0a8"></path></g>
          <path d="M68 3l5 2-17 64-4 14 1-15z" fill="#9fbdd4" stroke="#4d6678"></path>`;
      case "Trash":
        return svg`
          <defs><linearGradient id="tr" x1="0" y1="0" x2="1" y2="0"><stop offset="0" stop-color="#7c8186"></stop><stop offset=".3" stop-color="#565b60"></stop><stop offset=".7" stop-color="#5d6267"></stop><stop offset="1" stop-color="#8d9297"></stop></linearGradient></defs>
          <path d="M12 12L24 3l10-3 8 6 12-6 10 8 10 6-6 8H20z" fill="#e8e8e8"></path>
          <path d="M26 8l8 8M50 6l-8 12M62 8l-6 10M20 12l8 6" stroke="#555" stroke-width="3"></path><circle cx="38" cy="12" r="4" fill="#27b4d8"></circle><path d="M52 10l6 6" stroke="#c8552b" stroke-width="4"></path>
          <path d="M12 12q32 12 64 0l-8 66q-24 14-48 0z" fill="url(#tr)"></path>
          <path d="M12 12q32 12 64 0" fill="none" stroke="#9aa0a5" stroke-width="2"></path>`;
      case "Docker ウィンドウ":
        return svg`<rect x="1" y="19" width="86" height="50" fill="#22383d"></rect><rect x="1" y="19" width="86" height="5" fill="#263f45"></rect><rect x="1" y="24" width="13" height="43" fill="#172a30"></rect>
          <path d="M20 28h46M20 33h6M20 41h46M20 46h46M20 51h22M20 56h10" stroke="#31565f" stroke-width="1"></path><path d="M1 68h13" stroke="#3bc39c" stroke-width="2"></path>
          <circle cx="71" cy="71" r="15" fill="#05a9f8"></circle><g transform="translate(60 59) scale(.9)">${whale("#fff")}</g>`;
      case "Slack ウィンドウ":
        return svg`<rect x="1" y="19" width="86" height="50" fill="#19191c"></rect><rect x="1" y="19" width="17" height="50" fill="#231526"></rect><path d="M1 42h17" stroke="#1264a3" stroke-width="3"></path>
          <path d="M22 24h30M26 30h20M26 38h12M26 43h24M26 50h14M26 56h24M66 44h18M66 50h18M66 56h18" stroke="#4f5357" stroke-width="1"></path><rect x="66" y="25" width="20" height="10" fill="#f2f2f2"></rect>
          <rect x="57" y="57" width="28" height="28" rx="7" fill="#fcfcfc"></rect><g transform="translate(61 61) scale(.83)">${slackMark}</g>`;
      default:
        return svg`<rect x="1" y="16" width="86" height="55" fill="#202124"></rect><rect x="1" y="16" width="86" height="8" fill="#c9cbe0"></rect><path d="M4 18h52M6 22h66" stroke="#f2f2f8" stroke-width="2"></path>
          <path d="M8 31h16M8 35h12M8 39h18M8 46h36M8 50h38M8 54h36M8 61h22M8 67h36" stroke="#50607e" stroke-width="1"></path><rect x="48" y="44" width="34" height="12" fill="#e3d6d2"></rect>
          <rect x="57" y="57" width="28" height="28" rx="7" fill="#f6f6f6"></rect><g transform="translate(71 71) scale(.38)">${chromeMark}</g>`;
    }
  }

  render() {
    const apps: (string | null)[] = [
      "Finder", "Launchpad", "Chrome", "Safari", "Mail", "FaceTime", "Messages", "Maps", "Photos", "Calendar",
      "Reminders", "Notes", "Music", "App Store", "System", "VS Code", "Docker", "Slack", "Illustrator", null,
      "Docker", "Terminal", "TextEdit", null, "Docker ウィンドウ", "Slack ウィンドウ", "Chrome ウィンドウ", "Trash",
    ];
    const running = [0, 2, 3, 17, 20, 21];
    return html`${apps.map((name, i) =>
      name === null
        ? html`<div class="rule"></div>`
        : html`
            <button class=${classMap({ slot: true, run: running.includes(i) })} aria-label=${name}>
              <svg width="88" height="88" viewBox="0 0 88 88">${this.art(name)}</svg>
            </button>`
    )}`;
  }
}

/* ---------- desktop ---------- */

@customElement("app-root")
export class AppRoot extends LitElement {
  static styles = [
    base,
    css`
      :host {
        position: relative;
        width: 100%;
        height: 100vh;
        overflow: hidden;
        background: linear-gradient(180deg, #1c3a6c, #03142b 60%, #04101f);
      }
      .window {
        position: absolute;
      }
      .safari {
        top: 50px;
        left: 0;
        right: 0;
        bottom: 156px;
      }
      .finder {
        top: 490px;
        left: 82px;
        width: 200px;
        bottom: 438px;
      }
      .chrome {
        top: 124px;
        left: 200px;
        right: 280px;
        bottom: 152px;
      }
      .dock {
        position: absolute;
        left: 81px;
        right: 81px;
        bottom: 0;
        height: 124px;
      }
    `,
  ];

  render() {
    return html`
      <menu-bar></menu-bar>
      <safari-window class="window safari"></safari-window>
      <finder-window class="window finder"></finder-window>
      <chrome-window class="window chrome"></chrome-window>
      <app-dock class="dock"></app-dock>
    `;
  }
}
